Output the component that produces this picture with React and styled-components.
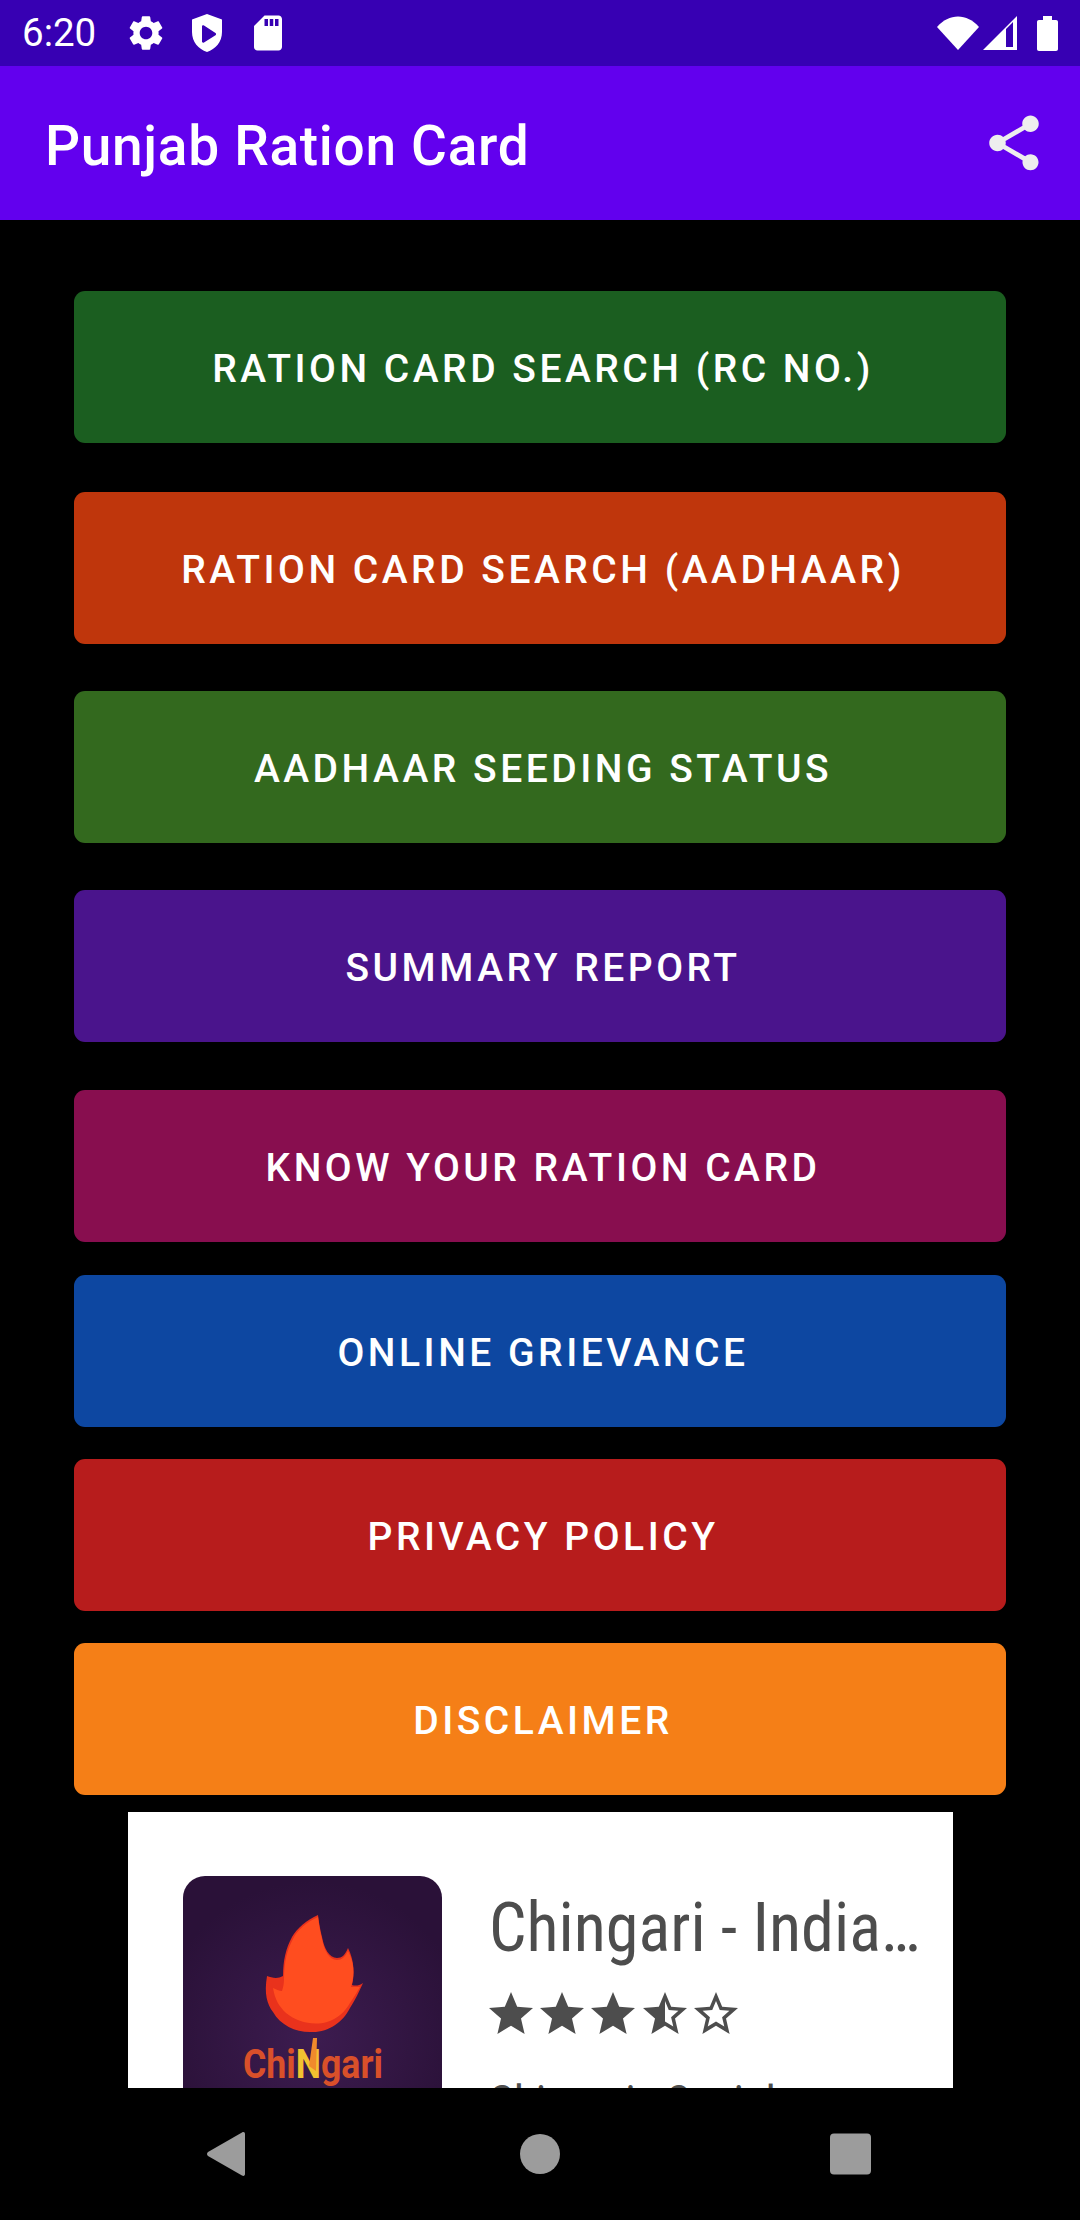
import React from 'react';
import styled, { createGlobalStyle } from 'styled-components';

const GlobalStyle = createGlobalStyle`
  html, body {
    margin: 0;
    padding: 0;
    background: #000;
  }
  * {
    box-sizing: border-box;
  }
`;

const Screen = styled.div`
  width: 1080px;
  height: 2220px;
  display: flex;
  flex-direction: column;
  background: #000;
  font-family: Roboto, "Liberation Sans", sans-serif;
  overflow: hidden;
`;

// status bar
const StatusBar = styled.div`
  height: 66px;
  flex: none;
  display: flex;
  align-items: center;
  justify-content: space-between;
  padding: 0 22px 0 22px;
  background: #3700b3;
  color: #fff;
`;
const StatusGroup = styled.div`
  display: flex;
  align-items: center;
`;
const Clock = styled.span`
  font-size: 38.5px;
  line-height: 66px;
  width: 103px;
`;
const NotifyIcon = styled.svg`
  display: block;
  width: 42px;
  height: 42px;
  margin-right: 19px;
  fill: #fff;
`;
const SystemIcon = styled.svg`
  display: block;
  width: ${(p) => p.$w}px;
  height: ${(p) => p.$h}px;
  margin-left: ${(p) => p.$gap}px;
  fill: #fff;
`;

// app bar
const AppBar = styled.div`
  height: 154px;
  flex: none;
  display: flex;
  align-items: center;
  justify-content: space-between;
  padding: 0 33px 0 45px;
  background: #6200ee;
`;
const AppTitle = styled.div`
  padding-top: 6px;
  color: #fff;
  font-size: 55px;
  font-weight: 500;
  letter-spacing: 0.69px;
`;
const ShareIcon = styled.svg`
  display: block;
  width: 66px;
  height: 66px;
  fill: #eeeeee;
`;

// menu
const Content = styled.div`
  flex: 1;
  min-height: 0;
  display: flex;
  flex-direction: column;
  align-items: center;
  padding-top: 71px;
  overflow: hidden;
`;
const MenuButton = styled.div`
  flex: none;
  width: 932px;
  height: 152px;
  margin-top: ${(p) => p.$top}px;
  padding: 3px 0 0 6px;
  display: flex;
  align-items: center;
  justify-content: center;
  border-radius: 11px;
  background: ${(p) => p.$color};
  color: #fff;
  font-size: 39px;
  font-weight: 500;
  letter-spacing: 3.5px;
`;

// ad
const AdCard = styled.div`
  flex: none;
  width: 825px;
  height: 276px;
  margin-top: 17px;
  padding: 64px 0 0 55px;
  display: flex;
  align-items: flex-start;
  gap: 47px;
  background: #fff;
  overflow: hidden;
`;
const AdIcon = styled.svg`
  display: block;
  flex: none;
  width: 259px;
  height: 259px;
  border-radius: 22px;
`;
const AdBody = styled.div`
  flex: 1;
  min-width: 0;
  padding-top: 14px;
  color: #4d4d4d;
`;
const AdTitle = styled.div`
  font-size: 69px;
  line-height: 76px;
  font-stretch: 75%;
  white-space: nowrap;
  transform: scaleX(0.96);
  transform-origin: left center;
`;
const Stars = styled.div`
  display: flex;
  gap: 7.4px;
  margin-top: 26px;
`;
const Star = styled.svg`
  display: block;
  width: 44px;
  height: 42px;
  fill: #4d4d4d;
`;
const AdText = styled.div`
  margin-top: 43px;
  font-size: 45px;
  line-height: 50px;
  font-stretch: 75%;
  white-space: nowrap;
`;

// nav bar
const NavBar = styled.div`
  height: 132px;
  flex: none;
  display: grid;
  grid-template-columns: 207px 40px 273px 40px 270px 41px;
  align-items: center;
  background: #000;
`;
const NavIcon = styled.svg`
  display: block;
  grid-column: ${(p) => p.$col};
  width: ${(p) => p.$w}px;
  height: 44px;
  fill: #9c9c9c;
`;

const menuItems = [
  { label: 'RATION CARD SEARCH (RC NO.)', color: '#1b5e20', top: 0 },
  { label: 'RATION CARD SEARCH (AADHAAR)', color: '#bf360c', top: 49 },
  { label: 'AADHAAR SEEDING STATUS', color: '#33691e', top: 47 },
  { label: 'SUMMARY REPORT', color: '#4a148c', top: 47 },
  { label: 'KNOW YOUR RATION CARD', color: '#880e4f', top: 48 },
  { label: 'ONLINE GRIEVANCE', color: '#0d47a1', top: 33 },
  { label: 'PRIVACY POLICY', color: '#b71c1c', top: 32 },
  { label: 'DISCLAIMER', color: '#f57f17', top: 32 },
];

const STAR_PATHS = {
  full: 'M12 17.27L18.18 21l-1.64-7.03L22 9.24l-7.19-.61L12 2 9.19 8.63 2 9.24l5.46 4.73L5.82 21z',
  half: 'M22 9.24l-7.19-.62L12 2 9.19 8.63 2 9.24l5.46 4.73L5.82 21 12 17.27 18.18 21l-1.63-7.03L22 9.24zM12 15.4V6.1l1.71 4.04 4.38.38-3.32 2.88 1 4.28L12 15.4z',
  empty: 'M22 9.24l-7.19-.62L12 2 9.19 8.63 2 9.24l5.46 4.73L5.82 21 12 17.27 18.18 21l-1.63-7.03L22 9.24zM12 15.4l-3.76 2.27 1-4.28-3.32-2.88 4.38-.38L12 6.1l1.71 4.04 4.38.38-3.32 2.88 1 4.28L12 15.4z',
};

const RatingStar = ({ kind }) => (
  <Star viewBox="2 2 20 19">
    <path d={STAR_PATHS[kind]} />
  </Star>
);

const ChingariLogo = () => (
  <AdIcon viewBox="0 0 259 259">
    <defs>
      <radialGradient id="logo-bg" cx="50%" cy="62%" r="60%">
        <stop offset="0%" stopColor="#3d1c50" />
        <stop offset="100%" stopColor="#2a1138" />
      </radialGradient>
    </defs>
    <rect width="259" height="259" fill="url(#logo-bg)" />
    <path
      d="M135 39 C124 44 114 52 109 61 C103 72 100 84 100 100 C95 103 89 102 84 100 C81 118 84 128 90 136 C98 150 114 157 130 156 C146 156 160 146 167 132 C172 124 176 116 180 107 C176 110 172 110 169 109 C172 98 171 84 165 72 C162 79 159 82 154 82 C146 82 141 72 139 61 C137 54 136 46 135 39 Z"
      fill="#e9321c"
    />
    <path
      d="M135 41 C124 46 114 54 110 63 C104 74 101 86 101 103 C101 108 100 112 99 115 C96 115 93 113 90 112 C92 124 96 130 103 137 C114 146 130 150 144 146 C154 143 162 136 167 127 C171 121 174 116 177 111 C175 111 171 111 168 111 C172 98 171 86 165 75 C162 81 159 84 154 84 C146 84 141 74 139 63 C137 56 136 48 135 41 Z"
      fill="#ff4d1f"
    />
    <text x="60" y="202" fontFamily="Roboto, sans-serif" fontWeight="700" fontSize="40" textLength="140" lengthAdjust="spacingAndGlyphs" fill="#d9502a">
      Chi<tspan fill="#f2c230">N</tspan>gari
    </text>
    <path d="M126 190 L130 162 L134 162 L133 195 Z" fill="#f08a2c" />
  </AdIcon>
);

const App = () => {
  return (
    <Screen>
      <GlobalStyle />
      <StatusBar>
        <StatusGroup>
          <Clock>6:20</Clock>
          <NotifyIcon viewBox="0 0 24 24">
            <path d="M19.14 12.94c.04-.3.06-.61.06-.94 0-.32-.02-.64-.07-.94l2.03-1.58c.18-.14.23-.41.12-.61l-1.92-3.32c-.12-.22-.37-.29-.59-.22l-2.39.96c-.5-.38-1.03-.7-1.62-.94l-.36-2.54c-.04-.24-.24-.41-.48-.41h-3.84c-.24 0-.43.17-.47.41l-.36 2.54c-.59.24-1.13.57-1.62.94l-2.39-.96c-.22-.08-.47 0-.59.22L2.74 8.87c-.12.21-.08.47.12.61l2.03 1.58c-.05.3-.09.63-.09.94s.02.64.07.94l-2.03 1.58c-.18.14-.23.41-.12.61l1.92 3.32c.12.22.37.29.59.22l2.39-.96c.5.38 1.03.7 1.62.94l.36 2.54c.05.24.24.41.48.41h3.84c.24 0 .44-.17.47-.41l.36-2.54c.59-.24 1.13-.56 1.62-.94l2.39.96c.22.08.47 0 .59-.22l1.92-3.32c.12-.22.07-.47-.12-.61l-2.01-1.58zM12 15.6c-1.98 0-3.6-1.62-3.6-3.6s1.62-3.6 3.6-3.6 3.6 1.62 3.6 3.6-1.62 3.6-3.6 3.6z" />
          </NotifyIcon>
          <NotifyIcon viewBox="0 0 42 42">
            <path
              fillRule="evenodd"
              d="M21 2 L36 7.5 V20 C36 30 29.5 37 21 40 C12.5 37 6 30 6 20 V7.5 Z M16 14.5 V29.5 C16 30.5 17 31 18 30.4 L29.5 23.2 C30.3 22.7 30.3 21.5 29.5 21 L18 13.6 C17 13 16 13.5 16 14.5 Z"
            />
          </NotifyIcon>
          <NotifyIcon viewBox="0 0 24 24">
            <path d="M18 2h-8L4.02 8 4 20c0 1.1.9 2 2 2h12c1.1 0 2-.9 2-2V4c0-1.1-.9-2-2-2zm-6 6h-2V4h2v4zm3 0h-2V4h2v4zm3 0h-2V4h2v4z" />
          </NotifyIcon>
        </StatusGroup>
        <StatusGroup>
          <SystemIcon $w={42} $h={34} $gap={0} viewBox="0 0 42 34">
            <path d="M0 11 C12 -3 30 -3 42 11 L21 34 Z" />
          </SystemIcon>
          <SystemIcon $w={34} $h={34} $gap={4} viewBox="0 0 34 34">
            <path fillRule="evenodd" d="M0 34 L34 0 V34 Z M23 31 H30 V6 L23 13 Z" />
          </SystemIcon>
          <SystemIcon $w={21} $h={35} $gap={20} viewBox="0 0 21 35">
            <path d="M6 0 H15 V4 H19 C20.2 4 21 4.8 21 6 V33 C21 34.2 20.2 35 19 35 H2 C0.8 35 0 34.2 0 33 V6 C0 4.8 0.8 4 2 4 H6 Z" />
          </SystemIcon>
        </StatusGroup>
      </StatusBar>
      <AppBar>
        <AppTitle>Punjab Ration Card</AppTitle>
        <ShareIcon viewBox="0 0 24 24">
          <path d="M18 16.08c-.76 0-1.44.3-1.96.77L8.91 12.7c.05-.23.09-.46.09-.7s-.04-.47-.09-.7l7.05-4.11c.54.5 1.25.81 2.04.81 1.66 0 3-1.34 3-3s-1.34-3-3-3-3 1.34-3 3c0 .24.04.47.09.7L8.04 9.81C7.5 9.31 6.79 9 6 9c-1.66 0-3 1.34-3 3s1.34 3 3 3c.79 0 1.5-.31 2.04-.81l7.12 4.16c-.05.21-.08.43-.08.65 0 1.61 1.31 2.92 2.92 2.92 1.61 0 2.92-1.31 2.92-2.92s-1.31-2.92-2.92-2.92z" />
        </ShareIcon>
      </AppBar>
      <Content>
        {menuItems.map((item) => (
          <MenuButton key={item.label} $color={item.color} $top={item.top}>
            {item.label}
          </MenuButton>
        ))}
        <AdCard>
          <ChingariLogo />
          <AdBody>
            <AdTitle>Chingari - India…</AdTitle>
            <Stars>
              <RatingStar kind="full" />
              <RatingStar kind="full" />
              <RatingStar kind="full" />
              <RatingStar kind="half" />
              <RatingStar kind="empty" />
            </Stars>
            <AdText>Chingari : Social</AdText>
          </AdBody>
        </AdCard>
      </Content>
      <NavBar>
        <NavIcon $col={2} $w={38} viewBox="0 0 38 44">
          <path d="M35 0.5 C36.8 -0.5 38 0.5 38 2 V42 C38 43.5 36.8 44.5 35 43.5 L1 24 C-0.3 23 -0.3 21 1 20 Z" />
        </NavIcon>
        <NavIcon $col={4} $w={40} viewBox="0 0 40 44">
          <ellipse cx="20" cy="22" rx="20" ry="20" />
        </NavIcon>
        <NavIcon $col={6} $w={41} viewBox="0 0 41 44">
          <rect x="0" y="1.5" width="41" height="41" rx="4" />
        </NavIcon>
      </NavBar>
    </Screen>
  );
};

export default App;
